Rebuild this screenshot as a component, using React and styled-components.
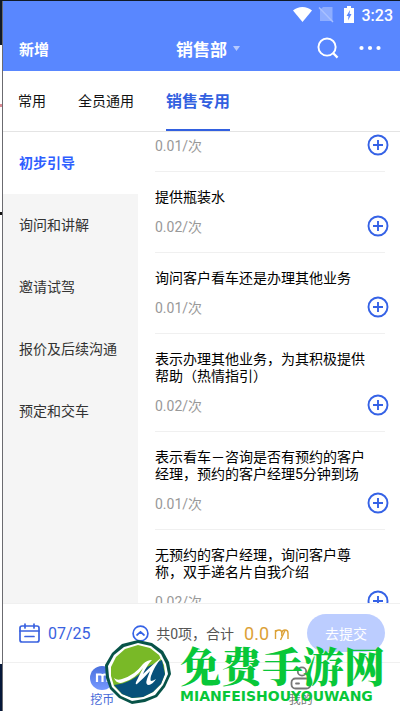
import React, { useState } from "react";
import styled, { createGlobalStyle } from "styled-components";

const GlobalStyle = createGlobalStyle`
  * {
    box-sizing: border-box;
  }
  body {
    margin: 0;
    font-family: Roboto, "Noto Sans CJK SC", sans-serif;
    font-size: 14px;
    color: #111;
  }
  button {
    border: none;
    padding: 0;
    background: none;
    font: inherit;
    color: inherit;
    cursor: pointer;
  }
  svg {
    display: block;
    flex: none;
  }
`;

const Desktop = styled.div`
  position: relative;
  height: 100vh;
  padding: 1px 0 0 2px;
  background: linear-gradient(
    #101a28 45px,
    #fff 45px,
    #fff 104px,
    #d98a94 104px,
    #d98a94 107px,
    #fff 107px,
    #fff 212px,
    #111 212px,
    #111 215px,
    #fff 215px,
    #fff 664px,
    #06183a 664px
  );
`;
const Phone = styled.div`
  display: flex;
  flex-direction: column;
  height: 100%;
  border-left: 1px solid #6b6b70;
  background: #fff;
`;
const Header = styled.header`
  background: #5987ff;
  color: #fff;
`;
const StatusBar = styled.div`
  display: flex;
  align-items: center;
  justify-content: flex-end;
  gap: 8px;
  height: 26px;
  padding: 2px 7px 0 0;
  font-size: 16px;
  font-weight: 500;
`;
const TitleBar = styled.div`
  display: grid;
  grid-template-columns: 1fr auto 1fr;
  align-items: center;
  height: 44px;
  padding: 0 19px 2px 16px;
`;
const NewButton = styled.button`
  justify-self: start;
  font-size: 15px;
  font-weight: 700;
`;
const Department = styled.button`
  display: flex;
  align-items: center;
  gap: 6px;
  padding-left: 16px;
  font-size: 17px;
  font-weight: 700;
`;
const Actions = styled.div`
  display: flex;
  align-items: center;
  justify-content: flex-end;
  gap: 20px;
`;
const Tabs = styled.nav`
  display: flex;
  gap: 32px;
  height: 61px;
  padding-left: 15px;
  border-bottom: 1px solid #e4e4e4;
`;
const Tab = styled.button`
  height: 60px;
  border-bottom: 2px solid ${(props) => (props.$active ? "#3260e0" : "transparent")};
  color: ${(props) => (props.$active ? "#3260e0" : "#111")};
  font-size: ${(props) => (props.$active ? "16px" : "14px")};
  font-weight: ${(props) => (props.$active ? 700 : 400)};
`;
const Body = styled.div`
  display: flex;
  flex: 1;
  min-height: 0;
`;
const Sidebar = styled.nav`
  flex: none;
  width: 135px;
  background: #f5f5f5;
`;
const Category = styled.button`
  display: block;
  width: 100%;
  height: 62px;
  padding: 0 0 2px 16px;
  text-align: left;
  background: ${(props) => (props.$active ? "#fff" : "transparent")};
  color: ${(props) => (props.$active ? "#2f5fff" : "#333")};
  font-weight: ${(props) => (props.$active ? 700 : 400)};
`;
const List = styled.main`
  flex: 1;
  min-width: 0;
  padding: 0 15px 0 17px;
  overflow: hidden;
`;
const Row = styled.section`
  padding: ${(props) => (props.$first ? "2px" : "17px")} 0 15px;
  border-bottom: 1px solid #f0f0f0;
`;
const RowTitle = styled.h3`
  margin: 0 10px 9px 0;
  font-size: 14px;
  font-weight: 400;
  line-height: 17px;
  color: #000;
`;
const RowFooter = styled.div`
  display: flex;
  align-items: center;
  justify-content: space-between;
  height: 22px;
  margin-right: -4px;
  color: #999;
`;
const Summary = styled.footer`
  display: flex;
  align-items: center;
  height: 59px;
  padding: 0 15px 0 16px;
  border-top: 1px solid #f0f0f0;
`;
const DateButton = styled.button`
  display: flex;
  align-items: center;
  gap: 8px;
  margin-right: auto;
  font-size: 16px;
  color: #3a62e0;
`;
const CountButton = styled.button`
  display: flex;
  align-items: center;
  gap: 7px;
  color: #555;
`;
const Amount = styled.span`
  display: flex;
  align-items: center;
  gap: 5px;
  margin: 0 17px 0 10px;
  font-size: 18px;
  color: #dca136;
`;
const Submit = styled.button`
  width: 78px;
  height: 38px;
  border-radius: 19px;
  background: #bccdff;
  color: #fff;
`;
const BottomNav = styled.nav`
  display: grid;
  grid-template-columns: 1fr 1fr;
  height: 49px;
  border-top: 1px solid #f0f0f0;
`;
const NavLink = styled.a`
  display: flex;
  flex-direction: column;
  align-items: center;
  gap: 1px;
  padding-top: 3px;
  font-size: 12px;
  line-height: 18px;
  text-decoration: none;
  color: ${(props) => (props.$active ? "#4468d8" : "#777")};
`;
const Watermark = styled.div`
  position: absolute;
  right: 13px;
  bottom: 7px;
  display: flex;
  align-items: flex-end;
  gap: 9px;
  color: #08c739;
  pointer-events: none;
`;
const WatermarkText = styled.div`
  display: flex;
  flex-direction: column;
  width: 207px;
`;
const SiteName = styled.strong`
  font-family: "Noto Serif CJK SC", "Noto Sans CJK SC", serif;
  font-size: 41px;
  font-weight: 900;
  line-height: 46px;
  white-space: nowrap;
`;
const SiteLatin = styled.span`
  font-family: "DejaVu Sans", sans-serif;
  font-size: 14px;
  font-weight: 700;
  line-height: 16px;
`;

const PlusIcon = () => (
  <svg width="22" height="22" viewBox="0 0 22 22" fill="none" stroke="#3562e6" strokeWidth="1.900">
    <circle cx="11" cy="11" r="9.500" />
    <path d="M11 6v10M6 11h10" />
  </svg>
);

const StatusIcons = () => (
  <svg width="61" height="18" viewBox="0 0 61 18" fill="#fff">
    <path d="M0 4.500C5-.2 14-.2 19 4.500L9.500 16z" />
    <path d="M30 1h9.500v14H27V4z" opacity=".32" />
    <path d="M26 1.500l14 14.500" stroke="#a9c0ff" strokeWidth="1.400" />
    <path d="M54 0h4v2h3v15H51V2h3z" />
    <path d="M57 4l-3.500 6h2l-.500 4.500L58.500 8h-2z" fill="#5987ff" />
  </svg>
);

const SearchIcon = () => (
  <svg width="22" height="22" viewBox="0 0 23 23" fill="none" stroke="#fff" strokeWidth="2">
    <circle cx="10.500" cy="10.500" r="9" />
    <path d="M16.500 16.500l5 5" strokeWidth="2.400" />
  </svg>
);

const MoreIcon = () => (
  <svg width="22" height="6" viewBox="0 0 22 6" fill="#fff">
    <circle cx="2.500" cy="3" r="2.100" />
    <circle cx="11" cy="3" r="2.100" />
    <circle cx="19.500" cy="3" r="2.100" />
  </svg>
);

const CalendarIcon = () => (
  <svg width="21" height="20" viewBox="0 0 21 20" fill="none" stroke="#3a62e0" strokeWidth="1.700" strokeLinecap="round">
    <rect x="1" y="3" width="19" height="16" rx="2" />
    <path d="M1 8h19M6 1v4M15 1v4M6 13.500h9" />
  </svg>
);

const UpIcon = () => (
  <svg width="17" height="17" viewBox="0 0 17 17" fill="none" stroke="#3562e6" strokeWidth="1.700">
    <circle cx="8.500" cy="8.500" r="7.400" />
    <path d="M5 10l3.500-3.200L12 10" strokeLinecap="round" />
  </svg>
);

const CoinMark = () => (
  <svg width="16" height="15" viewBox="0 0 16 15" fill="none" stroke="#dca136" strokeWidth="1.400">
    <path d="M1.500 13V4M1.500 6Q2.500 4 5 4q2.800 0 2.800 3v3M7.800 6.500Q8.500 4 11 4q3 0 3 3v6" />
    <path d="M11 4.500L6.500 14" />
  </svg>
);

const CoinIcon = () => (
  <svg width="24" height="24" viewBox="0 0 24 24" fill="none">
    <defs>
      <linearGradient id="coin" x1="0" y1="0" x2="0" y2="1">
        <stop stopColor="#4a70dd" />
        <stop offset="1" stopColor="#7799ff" />
      </linearGradient>
    </defs>
    <circle cx="12" cy="12" r="12" fill="url(#coin)" />
    <path d="M7 16V8.500h3.500q2 0 2 2V16m0-5.500q0-2 2-2h.500q2.500 0 2.500 2.500v5" stroke="#fff" strokeWidth="2.200" />
  </svg>
);

const ProfileIcon = () => (
  <svg width="22" height="24" viewBox="0 0 22 24" fill="none" stroke="#777" strokeWidth="1.800">
    <circle cx="12" cy="5.500" r="4.200" />
    <rect x="1.500" y="12.500" width="19" height="10" rx="4" />
    <path d="M6 17.500h3" strokeLinecap="round" />
  </svg>
);

const SiteLogo = () => (
  <svg width="66" height="64" viewBox="0 0 66 64">
    <path
      d="M33 0L47 3L58 11L64 22L66 34L60 47L52 57L40 62L27 64L14 58L5 49L1 38L0 25L7 13L17 4Z"
      fill="#075348"
    />
    <path
      d="M33 3L46 6L56 14L61 24L63 34L58 45L50 55L39 59L27 61L16 56L7 47L4 37L3 26L9 15L19 7Z"
      fill="#fff"
    />
    <path
      d="M33 5L45 8L54 15L59 25L60 34L56 44L48 52L38 57L27 58L17 54L9 46L6 36L6 27L11 17L20 9Z"
      fill="#79b927"
    />
    <path d="M9 45Q28 43 42 27L57 20L60 34L56 44L48 52L38 57L27 58L17 54Z" fill="#07517a" />
    <path
      d="M9 38q3 3 8 1Q30 35 38 24q4-4 9-4-5 5-9 14Q47 25 57 17q-8 10-11 19-1 4 0 5 2 0 5-2-3 5-7 6-4 0-2-6l3-8Q38 39 32 44q-2 1-1-2 3-6 7-14Q30 39 19 42q-7 3-10-4z"
      fill="#fff"
    />
  </svg>
);

const tabs = ["常用", "全员通用", "销售专用"];
const categories = ["初步引导", "询问和讲解", "邀请试驾", "报价及后续沟通", "预定和交车"];
const tasks = [
  { price: "0.01" },
  { title: "提供瓶装水", price: "0.02" },
  { title: "询问客户看车还是办理其他业务", price: "0.01" },
  { title: "表示办理其他业务，为其积极提供帮助（热情指引）", price: "0.02" },
  { title: "表示看车－咨询是否有预约的客户经理，预约的客户经理5分钟到场", price: "0.01" },
  { title: "无预约的客户经理，询问客户尊称，双手递名片自我介绍", price: "0.02" },
];

const App = () => {
  const [tab, setTab] = useState(2);
  const [category, setCategory] = useState(0);

  return (
    <Desktop lang="zh-CN">
      <GlobalStyle />
      <Phone>
        <Header>
          <StatusBar>
            <StatusIcons />
            <span>3:23</span>
          </StatusBar>
          <TitleBar>
            <NewButton>新增</NewButton>
            <Department>
              销售部
              <svg width="7" height="5" viewBox="0 0 7 5" fill="#b5c9ff">
                <path d="M0 0h7L3.500 5z" />
              </svg>
            </Department>
            <Actions>
              <button aria-label="搜索">
                <SearchIcon />
              </button>
              <button aria-label="更多">
                <MoreIcon />
              </button>
            </Actions>
          </TitleBar>
        </Header>
        <Tabs>
          {tabs.map((name, i) => (
            <Tab key={name} $active={i === tab} onClick={() => setTab(i)}>
              {name}
            </Tab>
          ))}
        </Tabs>
        <Body>
          <Sidebar>
            {categories.map((name, i) => (
              <Category key={name} $active={i === category} onClick={() => setCategory(i)}>
                {name}
              </Category>
            ))}
          </Sidebar>
          <List>
            {tasks.map((task, i) => (
              <Row key={i} $first={i === 0}>
                {task.title && <RowTitle>{task.title}</RowTitle>}
                <RowFooter>
                  <span>{task.price}/次</span>
                  <button aria-label="添加">
                    <PlusIcon />
                  </button>
                </RowFooter>
              </Row>
            ))}
          </List>
        </Body>
        <Summary>
          <DateButton>
            <CalendarIcon />
            07/25
          </DateButton>
          <CountButton>
            <UpIcon />
            共0项，合计
          </CountButton>
          <Amount>
            0.0
            <CoinMark />
          </Amount>
          <Submit>去提交</Submit>
        </Summary>
        <BottomNav>
          <NavLink href="#coin" $active>
            <CoinIcon />
            挖币
          </NavLink>
          <NavLink href="#me">
            <ProfileIcon />
            我的
          </NavLink>
        </BottomNav>
      </Phone>
      <Watermark>
        <SiteLogo />
        <WatermarkText>
          <SiteName>免费手游网</SiteName>
          <SiteLatin>MIANFEISHOUYOUWANG</SiteLatin>
        </WatermarkText>
      </Watermark>
    </Desktop>
  );
};

export default App;
